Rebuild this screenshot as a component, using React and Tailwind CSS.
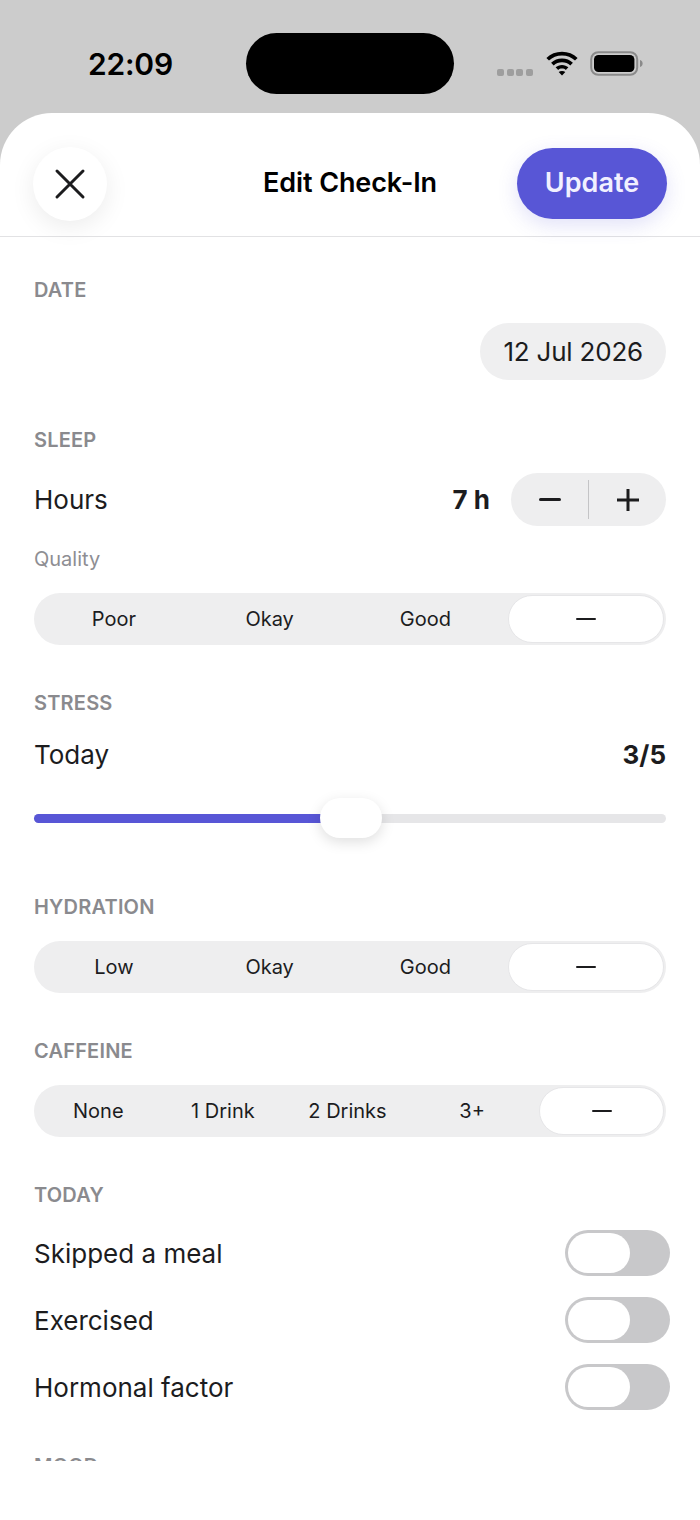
import React from "react";

const font = { fontFamily: "Inter, 'Noto Sans', sans-serif" };

function Label({ children, className = "" }) {
  return (
    <div className={"text-[20px] leading-[24px] font-semibold tracking-[0.2px] text-[#8a8a8e] uppercase " + className}>
      {children}
    </div>
  );
}

function Segmented({ options, className = "" }) {
  return (
    <div className={"flex h-[52px] rounded-full bg-[#eeeeef] p-[2px] " + className}>
      {options.map((o, i) => {
        const sel = i === options.length - 1;
        if (sel) {
          return (
            <div key={i} className="flex flex-1 pl-[5px]">
              <div className="flex flex-1 items-center justify-center rounded-full border border-[#e6e6e8] bg-white">
                <span className="block h-[2.5px] w-[20px] rounded bg-[#1c1c1e]" />
              </div>
            </div>
          );
        }
        return (
          <div key={i} className="flex flex-1 items-center justify-center text-[20px] text-[#1c1c1e]">
            {o}
          </div>
        );
      })}
    </div>
  );
}

function Toggle() {
  return (
    <div className="-mr-[4px] h-[46px] w-[105px] rounded-full bg-[#c8c8ca] p-[3px]">
      <div className="h-full w-[62px] rounded-full bg-white" />
    </div>
  );
}

export default function App() {
  return (
    <div style={font} className="flex h-[1520px] w-[700px] flex-col overflow-hidden bg-[#cccccc]">
      {/* status bar */}
      <div className="relative flex h-[113px] shrink-0 items-start">
        <div className="absolute left-[88px] top-[44px] text-[30px] font-semibold leading-[40px] tracking-[-0.2px] text-black">
          22:09
        </div>
        <div className="absolute left-[246px] top-[33px] h-[61px] w-[208px] rounded-full bg-black" />
        <div className="absolute left-[497px] top-[69px] flex gap-[2.5px]">
          {[0, 1, 2, 3].map((i) => (
            <div key={i} className="h-[7px] w-[7px] rounded-[2px] bg-[#9e9e9e]" />
          ))}
        </div>
        <svg className="absolute left-[545px] top-[51px]" width="34" height="25" viewBox="0 0 34 25">
          <path d="M17 4.5c5 0 9.6 1.9 13 5.1l2.6-2.7C28.5 3 23 .8 17 .8S5.5 3 1.4 6.9L4 9.6C7.4 6.4 12 4.5 17 4.5z" fill="#000" />
          <path d="M17 11.2c3.2 0 6.1 1.2 8.3 3.2l2.6-2.7c-2.9-2.6-6.7-4.2-10.9-4.2S9 9.1 6.1 11.7l2.6 2.7c2.2-2 5.1-3.2 8.3-3.2z" fill="#000" />
          <path d="M17 17.6c1.5 0 2.8.5 3.8 1.4l2.6-2.7c-1.7-1.5-3.9-2.4-6.4-2.4s-4.7.9-6.4 2.4l2.6 2.7c1-.9 2.3-1.4 3.8-1.4z" fill="#000" />
          <path d="M17 24.5l3.3-3.4c-.9-.8-2-1.2-3.3-1.2s-2.4.4-3.3 1.2z" fill="#000" />
        </svg>
        <svg className="absolute left-[590px] top-[51px]" width="54" height="26" viewBox="0 0 54 26">
          <rect x="1.2" y="1.2" width="46" height="22.6" rx="7" fill="none" stroke="#8a8a8a" strokeWidth="2" />
          <rect x="4" y="4" width="40.4" height="17" rx="4.5" fill="#000" />
          <path d="M50 9v7c1.6-.4 2.6-1.8 2.6-3.5S51.6 9.4 50 9z" fill="#8a8a8a" />
        </svg>
      </div>

      {/* sheet */}
      <div className="flex flex-1 flex-col rounded-t-[52px] bg-white">
        {/* header */}
        <div className="grid h-[124px] shrink-0 grid-cols-[1fr_auto_1fr] items-center border-b border-[#e2e2e4] px-[33px] pt-[18px]">
          <div className="flex justify-start">
            <div className="flex h-[74px] w-[74px] items-center justify-center rounded-full bg-white shadow-[0_6px_24px_rgba(0,0,0,0.08)]">
              <svg width="32" height="32" viewBox="0 0 32 32">
                <path d="M3 3l26 26M29 3L3 29" stroke="#1c1c1e" strokeWidth="3" strokeLinecap="round" />
              </svg>
            </div>
          </div>
          <div className="text-[27px] font-semibold tracking-[-0.1px] text-black">Edit Check-In</div>
          <div className="flex justify-end">
            <div className="flex h-[71px] w-[150px] items-center justify-center rounded-full bg-[#5856d6] text-[27px] font-semibold text-[#f1f0ff] shadow-[0_6px_20px_rgba(88,86,214,0.18)]">
              Update
            </div>
          </div>
        </div>

        {/* content */}
        <div className="h-[1224px] shrink-0 overflow-hidden px-[34px] pt-[41px] text-[#1c1c1e]">
          <Label>Date</Label>
          <div className="mt-[21px] flex justify-end">
            <div className="flex h-[57px] items-center rounded-full bg-[#efeff0] px-[23px] text-[26px] tracking-[-0.2px]">
              12 Jul 2026
            </div>
          </div>

          <Label className="mt-[48px]">Sleep</Label>
          <div className="mt-[21px] flex h-[53px] items-center">
            <div className="flex-1 text-[26px]">Hours</div>
            <div className="mr-[21px] text-[26px] font-bold">7 h</div>
            <div className="flex h-[53px] w-[155px] items-center rounded-full bg-[#eeeeef]">
              <div className="flex flex-1 items-center justify-center">
                <span className="block h-[3px] w-[22px] rounded bg-[#1c1c1e]" />
              </div>
              <div className="h-[39px] w-[1px] bg-[#c4c4c6]" />
              <div className="flex flex-1 items-center justify-center">
                <svg width="22" height="22" viewBox="0 0 22 22">
                  <path d="M11 0v22M0 11h22" stroke="#1c1c1e" strokeWidth="3" />
                </svg>
              </div>
            </div>
          </div>
          <div className="mt-[21px] text-[20px] leading-[24px] text-[#8e8e93]">Quality</div>
          <Segmented className="mt-[22px]" options={["Poor", "Okay", "Good", "-"]} />

          <Label className="mt-[46px]">Stress</Label>
          <div className="mt-[19px] flex h-[40px] items-center justify-between text-[26px]">
            <div>Today</div>
            <div className="font-bold">3/5</div>
          </div>
          <div className="relative mt-[24px] h-[40px]">
            <div className="absolute left-0 right-0 top-[16px] h-[9px] rounded-full bg-[#e6e6e8]" />
            <div className="absolute left-0 top-[16px] h-[9px] w-[300px] rounded-l-full bg-[#5856d6]" />
            <div className="absolute left-[286px] top-0 h-[40px] w-[62px] rounded-[20px] bg-white shadow-[0_4px_14px_rgba(0,0,0,0.13)]" />
          </div>

          <Label className="mt-[57px]">Hydration</Label>
          <Segmented className="mt-[22px]" options={["Low", "Okay", "Good", "-"]} />

          <Label className="mt-[46px]">Caffeine</Label>
          <Segmented className="mt-[22px]" options={["None", "1 Drink", "2 Drinks", "3+", "-"]} />

          <Label className="mt-[46px]">Today</Label>
          <div className="mt-[23px] flex flex-col gap-[21px]">
            {["Skipped a meal", "Exercised", "Hormonal factor"].map((t) => (
              <div key={t} className="flex h-[46px] items-center justify-between">
                <div className="text-[26px]">{t}</div>
                <Toggle />
              </div>
            ))}
          </div>

          <Label className="mt-[44px]">Mood</Label>
        </div>
      </div>
    </div>
  );
}
